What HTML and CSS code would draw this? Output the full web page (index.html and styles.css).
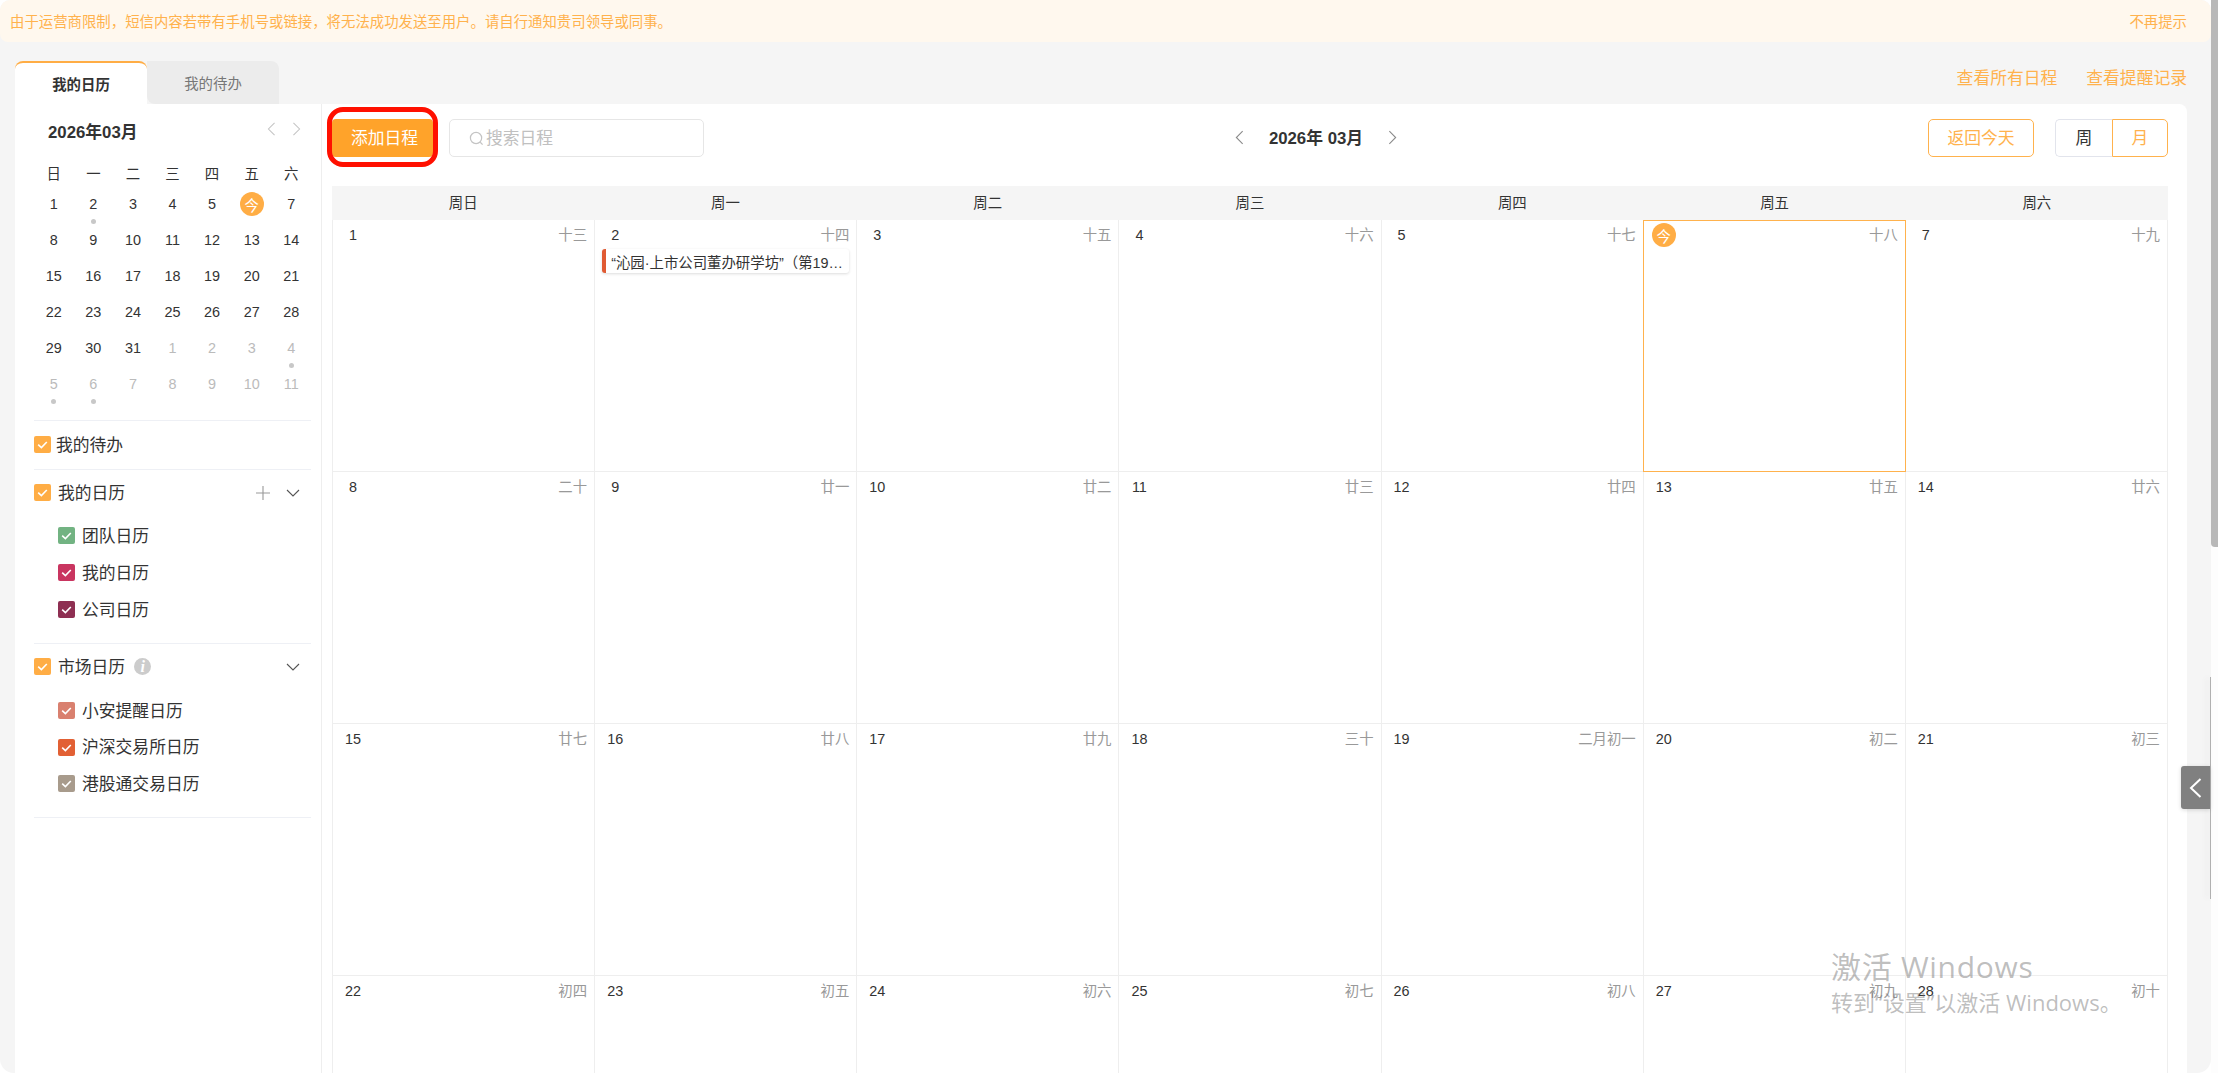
FILE: index.html
```html
<!DOCTYPE html>
<html lang="zh-CN">
<head>
<meta charset="utf-8">
<title>我的日历</title>
<link rel="stylesheet" href="styles.css">
</head>
<body>
<svg class="defs" width="0" height="0" aria-hidden="true">
  <symbol id="tick" viewBox="0 0 17 17"><path d="M4.2 8.6 7.4 11.6 12.8 6" fill="none" stroke="#fff" stroke-width="1.6"/></symbol>
  <symbol id="left" viewBox="0 0 10 16"><path d="M8.5 1 1.5 8 8.5 15" fill="none" stroke="currentColor" stroke-width="1.2"/></symbol>
  <symbol id="right" viewBox="0 0 10 16"><path d="M1.5 1 8.5 8 1.5 15" fill="none" stroke="currentColor" stroke-width="1.2"/></symbol>
  <symbol id="down" viewBox="0 0 14 8"><path d="M1 1 7 7 13 1" fill="none" stroke="#555" stroke-width="1.1"/></symbol>
</svg>
<div class="app">
  <div class="page">
    <div class="banner">
      <span>由于运营商限制，短信内容若带有手机号或链接，将无法成功发送至用户。请自行通知贵司领导或同事。</span>
      <span>不再提示</span>
    </div>
    <div class="head">
      <div class="tabs">
        <div class="tab tab-on">我的日历</div>
        <div class="tab tab-off">我的待办</div>
      </div>
      <div class="links"><span>查看所有日程</span><span>查看提醒记录</span></div>
    </div>
    <div class="panel">
      <aside class="side">
        <div class="mini-head">
          <span class="mini-title">2026年03月</span>
          <span class="mini-nav">
            <svg class="mini-arrow"><use href="#left"/></svg>
            <svg class="mini-arrow"><use href="#right"/></svg>
          </span>
        </div>
        <div class="mini">
          <div class="wk">日</div><div class="wk">一</div><div class="wk">二</div><div class="wk">三</div><div class="wk">四</div><div class="wk">五</div><div class="wk">六</div>
          <div class="d">1</div><div class="d dot">2</div><div class="d">3</div><div class="d">4</div><div class="d">5</div><div class="d"><span class="today">今</span></div><div class="d">7</div>
          <div class="d">8</div><div class="d">9</div><div class="d">10</div><div class="d">11</div><div class="d">12</div><div class="d">13</div><div class="d">14</div>
          <div class="d">15</div><div class="d">16</div><div class="d">17</div><div class="d">18</div><div class="d">19</div><div class="d">20</div><div class="d">21</div>
          <div class="d">22</div><div class="d">23</div><div class="d">24</div><div class="d">25</div><div class="d">26</div><div class="d">27</div><div class="d">28</div>
          <div class="d">29</div><div class="d">30</div><div class="d">31</div><div class="d off">1</div><div class="d off">2</div><div class="d off">3</div><div class="d off dot">4</div>
          <div class="d off dot">5</div><div class="d off dot">6</div><div class="d off">7</div><div class="d off">8</div><div class="d off">9</div><div class="d off">10</div><div class="d off">11</div>
        </div>
        <section class="group group-single">
          <div class="row">
            <span class="cb c-orange"><svg><use href="#tick"/></svg></span><span class="lbl lbl-tight">我的待办</span>
          </div>
        </section>
        <section class="group">
          <div class="row">
            <span class="cb c-orange"><svg><use href="#tick"/></svg></span><span class="lbl">我的日历</span>
            <span class="tools">
              <svg class="plus" viewBox="0 0 14 14"><path d="M7 0V14M0 7H14" stroke="#999" stroke-width="1.1"/></svg>
              <svg class="chev"><use href="#down"/></svg>
            </span>
          </div>
          <div class="subs">
            <div class="row"><span class="cb c-green"><svg><use href="#tick"/></svg></span><span class="lbl">团队日历</span></div>
            <div class="row"><span class="cb c-pink"><svg><use href="#tick"/></svg></span><span class="lbl">我的日历</span></div>
            <div class="row"><span class="cb c-wine"><svg><use href="#tick"/></svg></span><span class="lbl">公司日历</span></div>
          </div>
        </section>
        <section class="group group-last">
          <div class="row">
            <span class="cb c-orange"><svg><use href="#tick"/></svg></span><span class="lbl">市场日历</span><span class="info">i</span>
            <span class="tools"><svg class="chev"><use href="#down"/></svg></span>
          </div>
          <div class="subs subs-tight">
            <div class="row"><span class="cb c-salmon"><svg><use href="#tick"/></svg></span><span class="lbl">小安提醒日历</span></div>
            <div class="row"><span class="cb c-red"><svg><use href="#tick"/></svg></span><span class="lbl">沪深交易所日历</span></div>
            <div class="row"><span class="cb c-taupe"><svg><use href="#tick"/></svg></span><span class="lbl">港股通交易日历</span></div>
          </div>
        </section>
      </aside>
      <main class="main">
        <div class="toolbar">
          <div class="tool-left">
            <div class="add-wrap">
              <button class="add">添加日程</button>
              <span class="ring"></span>
            </div>
            <div class="search">
              <svg class="search-ico" viewBox="0 0 16 16"><circle cx="7.5" cy="7.5" r="6" fill="none" stroke="#c4c4c4" stroke-width="1.3"/><path d="M12 12 14.5 14.5" stroke="#c4c4c4" stroke-width="1.3"/></svg>
              <span>搜索日程</span>
            </div>
          </div>
          <div class="month-nav">
            <svg class="nav-arrow"><use href="#left"/></svg>
            <span class="month">2026年 03月</span>
            <svg class="nav-arrow"><use href="#right"/></svg>
          </div>
          <div class="tool-right">
            <button class="btn-today">返回今天</button>
            <div class="switch"><span class="sw">周</span><span class="sw sw-on">月</span></div>
          </div>
        </div>
        <div class="week">
          <div>周日</div><div>周一</div><div>周二</div><div>周三</div><div>周四</div><div>周五</div><div>周六</div>
        </div>
        <div class="cal">
          <div class="cell"><div class="ch"><span class="n">1</span><span class="l">十三</span></div></div>
          <div class="cell"><div class="ch"><span class="n">2</span><span class="l">十四</span></div><div class="event"><span>“沁园·上市公司董办研学坊”（第19期）</span></div></div>
          <div class="cell"><div class="ch"><span class="n">3</span><span class="l">十五</span></div></div>
          <div class="cell"><div class="ch"><span class="n">4</span><span class="l">十六</span></div></div>
          <div class="cell"><div class="ch"><span class="n">5</span><span class="l">十七</span></div></div>
          <div class="cell cell-today"><div class="ch"><span class="n n-today">今</span><span class="l">十八</span></div></div>
          <div class="cell"><div class="ch"><span class="n">7</span><span class="l">十九</span></div></div>

          <div class="cell"><div class="ch"><span class="n">8</span><span class="l">二十</span></div></div>
          <div class="cell"><div class="ch"><span class="n">9</span><span class="l">廿一</span></div></div>
          <div class="cell"><div class="ch"><span class="n">10</span><span class="l">廿二</span></div></div>
          <div class="cell"><div class="ch"><span class="n">11</span><span class="l">廿三</span></div></div>
          <div class="cell"><div class="ch"><span class="n">12</span><span class="l">廿四</span></div></div>
          <div class="cell"><div class="ch"><span class="n">13</span><span class="l">廿五</span></div></div>
          <div class="cell"><div class="ch"><span class="n">14</span><span class="l">廿六</span></div></div>

          <div class="cell"><div class="ch"><span class="n">15</span><span class="l">廿七</span></div></div>
          <div class="cell"><div class="ch"><span class="n">16</span><span class="l">廿八</span></div></div>
          <div class="cell"><div class="ch"><span class="n">17</span><span class="l">廿九</span></div></div>
          <div class="cell"><div class="ch"><span class="n">18</span><span class="l">三十</span></div></div>
          <div class="cell"><div class="ch"><span class="n">19</span><span class="l">二月初一</span></div></div>
          <div class="cell"><div class="ch"><span class="n">20</span><span class="l">初二</span></div></div>
          <div class="cell"><div class="ch"><span class="n">21</span><span class="l">初三</span></div></div>

          <div class="cell"><div class="ch"><span class="n">22</span><span class="l">初四</span></div></div>
          <div class="cell"><div class="ch"><span class="n">23</span><span class="l">初五</span></div></div>
          <div class="cell"><div class="ch"><span class="n">24</span><span class="l">初六</span></div></div>
          <div class="cell"><div class="ch"><span class="n">25</span><span class="l">初七</span></div></div>
          <div class="cell"><div class="ch"><span class="n">26</span><span class="l">初八</span></div></div>
          <div class="cell"><div class="ch"><span class="n">27</span><span class="l">初九</span></div></div>
          <div class="cell"><div class="ch"><span class="n">28</span><span class="l">初十</span></div></div>
        </div>
      </main>
    </div>
  </div>
  <div class="scroll"><div class="thumb"></div></div>
  <div class="edge"></div>
  <div class="handle"><svg class="handle-ico" viewBox="0 0 13 20"><path d="M11.5 1 2 10 11.5 19" fill="none" stroke="#fff" stroke-width="2"/></svg></div>
  <div class="watermark">
    <div class="wm1">激活 Windows</div>
    <div class="wm2">转到“设置”以激活 Windows。</div>
  </div>
</div>
</body>
</html>
```

FILE: styles.css
```css
* { box-sizing: border-box; }
html, body { margin: 0; padding: 0; height: 100%; overflow: hidden; background: #fff; }
body { font-family: "Liberation Sans", "Noto Sans CJK SC", sans-serif; color: #333; font-size: 14.4px; text-spacing-trim: space-all; }
.defs { position: absolute; }
button { font-family: inherit; margin: 0; cursor: pointer; }

.app { position: relative; display: flex; width: 2218px; height: 1073px; overflow: hidden; }
.page { flex: 1; min-width: 0; height: 1073px; overflow: hidden; background: #f5f5f5; border-radius: 10px 10px 14px 14px; display: flex; flex-direction: column; }

.banner { flex: none; height: 42px; display: flex; justify-content: space-between; align-items: center; padding: 0 24px 2px 10px; background: #fff8ee; color: #ffb24d; border-radius: 8px; font-size: 14.4px; }

.head { flex: none; height: 62px; display: flex; justify-content: space-between; align-items: flex-end; padding: 0 24px 0 15px; }
.tabs { display: flex; height: 43px; }
.tab { width: 132px; display: flex; align-items: center; justify-content: center; font-size: 14.4px; }
.tab-on { background: #fff; border-top: 2px solid #ffad45; border-radius: 8px 8px 0 0; font-weight: 700; }
.tab-off { background: #ececec; color: #777; border-radius: 0 8px 0 8px; }
.links { display: flex; gap: 29px; color: #ffb24d; font-size: 16.8px; padding-bottom: 12px; line-height: 26px; }

.panel { flex: 1; min-height: 0; margin: 0 24px 0 15px; background: #fff; border-radius: 0 8px 0 0; display: flex; }

.side { flex: none; width: 307px; padding: 15px 10px 0 19px; border-right: 1px solid #eee; }
.mini-head { display: flex; justify-content: space-between; align-items: center; height: 24px; padding: 0 10px 0 14px; margin-bottom: 17px; }
.mini-title { font-size: 16.8px; font-weight: 700; }
.mini-nav { display: flex; gap: 16px; color: #c4c4c4; margin-top: -4px; }
.mini-arrow { width: 9px; height: 14px; display: block; }
.mini { display: grid; grid-template-columns: repeat(7, 1fr); margin-bottom: 18px; }
.wk { height: 26px; padding-bottom: 2px; display: flex; align-items: center; justify-content: center; font-size: 14.4px; }
.d { position: relative; height: 36px; display: flex; align-items: center; justify-content: center; font-size: 14.4px; }
.off { color: #bbb; }
.dot::after { content: ""; position: absolute; left: 50%; bottom: -2px; width: 5px; height: 5px; margin-left: -2.5px; border-radius: 50%; background: #c8c8c8; }
.today { width: 24px; height: 24px; border-radius: 50%; background: #ffad45; color: #fff; display: flex; align-items: center; justify-content: center; font-size: 14.4px; }

.group { border-top: 1px solid #eef0f5; padding: 14px 0 25px; }
.group-single { padding: 15px 0 16px; }
.group-last { border-bottom: 1px solid #eef0f5; }
.row { display: flex; align-items: center; height: 17px; font-size: 16.8px; }
.lbl { margin-left: 7px; white-space: nowrap; position: relative; top: -1px; }
.lbl-tight { margin-left: 5px; }
.cb { flex: none; width: 17px; height: 17px; border-radius: 2px; display: block; }
.cb svg { display: block; width: 17px; height: 17px; }
.c-orange { background: #ffad45; }
.c-green { background: #72b382; }
.c-pink { background: #c93560; }
.c-wine { background: #8e2f52; }
.c-salmon { background: #d9806f; }
.c-red { background: #e26034; }
.c-taupe { background: #a89b8c; }
.tools { margin-left: auto; display: flex; align-items: center; gap: 16px; padding-right: 11px; }
.plus { width: 14px; height: 14px; display: block; }
.chev { width: 14px; height: 8px; display: block; }
.info { margin-left: 9px; width: 17px; height: 17px; border-radius: 50%; background: #ccc; color: #fff; display: flex; align-items: center; justify-content: center; font: italic 700 16px "Liberation Serif", serif; }
.subs { display: flex; flex-direction: column; gap: 20px; padding: 26px 0 0 24px; }
.subs-tight { gap: 19.5px; padding-top: 27px; }

.main { flex: 1; min-width: 0; padding: 0 19px 0 10px; }
.toolbar { height: 82px; padding-top: 15px; display: flex; justify-content: space-between; align-items: flex-start; }
.tool-left { display: flex; gap: 16px; }
.add-wrap { position: relative; }
.add { display: block; width: 101px; height: 38px; border: 0; border-radius: 4px; background: #ffa32a; color: #fff; font-size: 16.8px; padding: 0 0 2px 4px; }
.ring { position: absolute; left: -5px; top: -12px; width: 111px; height: 60px; border: 5px solid #ff1000; border-radius: 16px; pointer-events: none; }
.search { width: 255px; height: 38px; border: 1px solid #e6e6e6; border-radius: 5px; display: flex; align-items: center; padding: 0 0 2px 19px; color: #c0c0c0; font-size: 16.8px; gap: 2px; }
.search-ico { width: 15px; height: 15px; display: block; margin-top: 2px; }
.month-nav { height: 38px; padding-bottom: 2px; display: flex; align-items: center; gap: 25px; color: #8a8a8a; }
.nav-arrow { width: 9px; height: 15px; display: block; }
.month { color: #333; font-size: 16.8px; font-weight: 700; white-space: nowrap; }
.tool-right { display: flex; gap: 21px; }
.btn-today { width: 106px; height: 38px; padding: 0 0 2px; border: 1px solid #ffb24d; border-radius: 5px; background: #fff; color: #ffb24d; font-size: 16.8px; }
.switch { display: flex; height: 38px; width: 113px; font-size: 16.8px; }
.sw { flex: none; width: 57px; padding-bottom: 2px; display: flex; align-items: center; justify-content: center; border: 1px solid #e2e4ec; border-right: 0; border-radius: 5px 0 0 5px; }
.sw-on { width: 56px; border: 1px solid #ffb24d; border-radius: 0 5px 5px 0; color: #ffb24d; }

.week { height: 34px; padding-bottom: 3px; background: #f5f5f5; display: grid; grid-template-columns: repeat(7, 1fr); align-items: center; text-align: center; font-size: 14.4px; }
.cal { display: grid; grid-template-columns: repeat(7, 1fr); grid-auto-rows: 252px; border-left: 1px solid #eee; }
.cell { border-right: 1px solid #eee; border-bottom: 1px solid #eee; padding: 3px 7px 0 8px; min-width: 0; }
.cell-today { border: 1px solid #ffb24d; margin-left: -1px; padding-top: 2px; }
.ch { display: flex; justify-content: space-between; align-items: center; height: 24px; }
.n { width: 24px; height: 24px; display: flex; align-items: center; justify-content: center; font-size: 14.4px; }
.n-today { border-radius: 50%; background: #ffad45; color: #fff; }
.l { color: #999; font-size: 14.4px; padding-bottom: 3px; }
.event { height: 24px; margin: 2px 0 0 -1px; background: #fff; border-left: 4px solid #e05a33; border-radius: 3px; box-shadow: 0 1px 3px rgba(0,0,0,.14); padding-left: 5px; display: flex; align-items: center; font-size: 14.4px; overflow: hidden; }
.event span { white-space: nowrap; overflow: hidden; text-overflow: ellipsis; }

.scroll { flex: none; width: 7px; height: 1073px; background: #fdfdfd; }
.thumb { height: 547px; background: #b8b8b8; border-radius: 0 0 0 4px; }
.edge { position: absolute; left: 2210px; top: 677px; width: 1px; height: 222px; background: #b0b0b0; box-shadow: -3px 0 6px rgba(0,0,0,.12); }
.handle { position: absolute; left: 2181px; top: 766px; width: 29px; height: 43px; background: #808080; border-radius: 3px 0 0 3px; display: flex; align-items: center; justify-content: flex-end; padding-right: 8px; box-shadow: 0 1px 4px rgba(0,0,0,.15); }
.handle-ico { width: 13px; height: 20px; display: block; }

.watermark { position: absolute; left: 1831px; top: 949px; color: rgba(110,110,110,.45); font-family: "Open Sans", "Noto Sans CJK SC", sans-serif; pointer-events: none; white-space: nowrap; }
.wm1 { font-size: 30px; line-height: 36px; letter-spacing: .7px; }
.wm2 { font-size: 22px; line-height: 34px; }
```
